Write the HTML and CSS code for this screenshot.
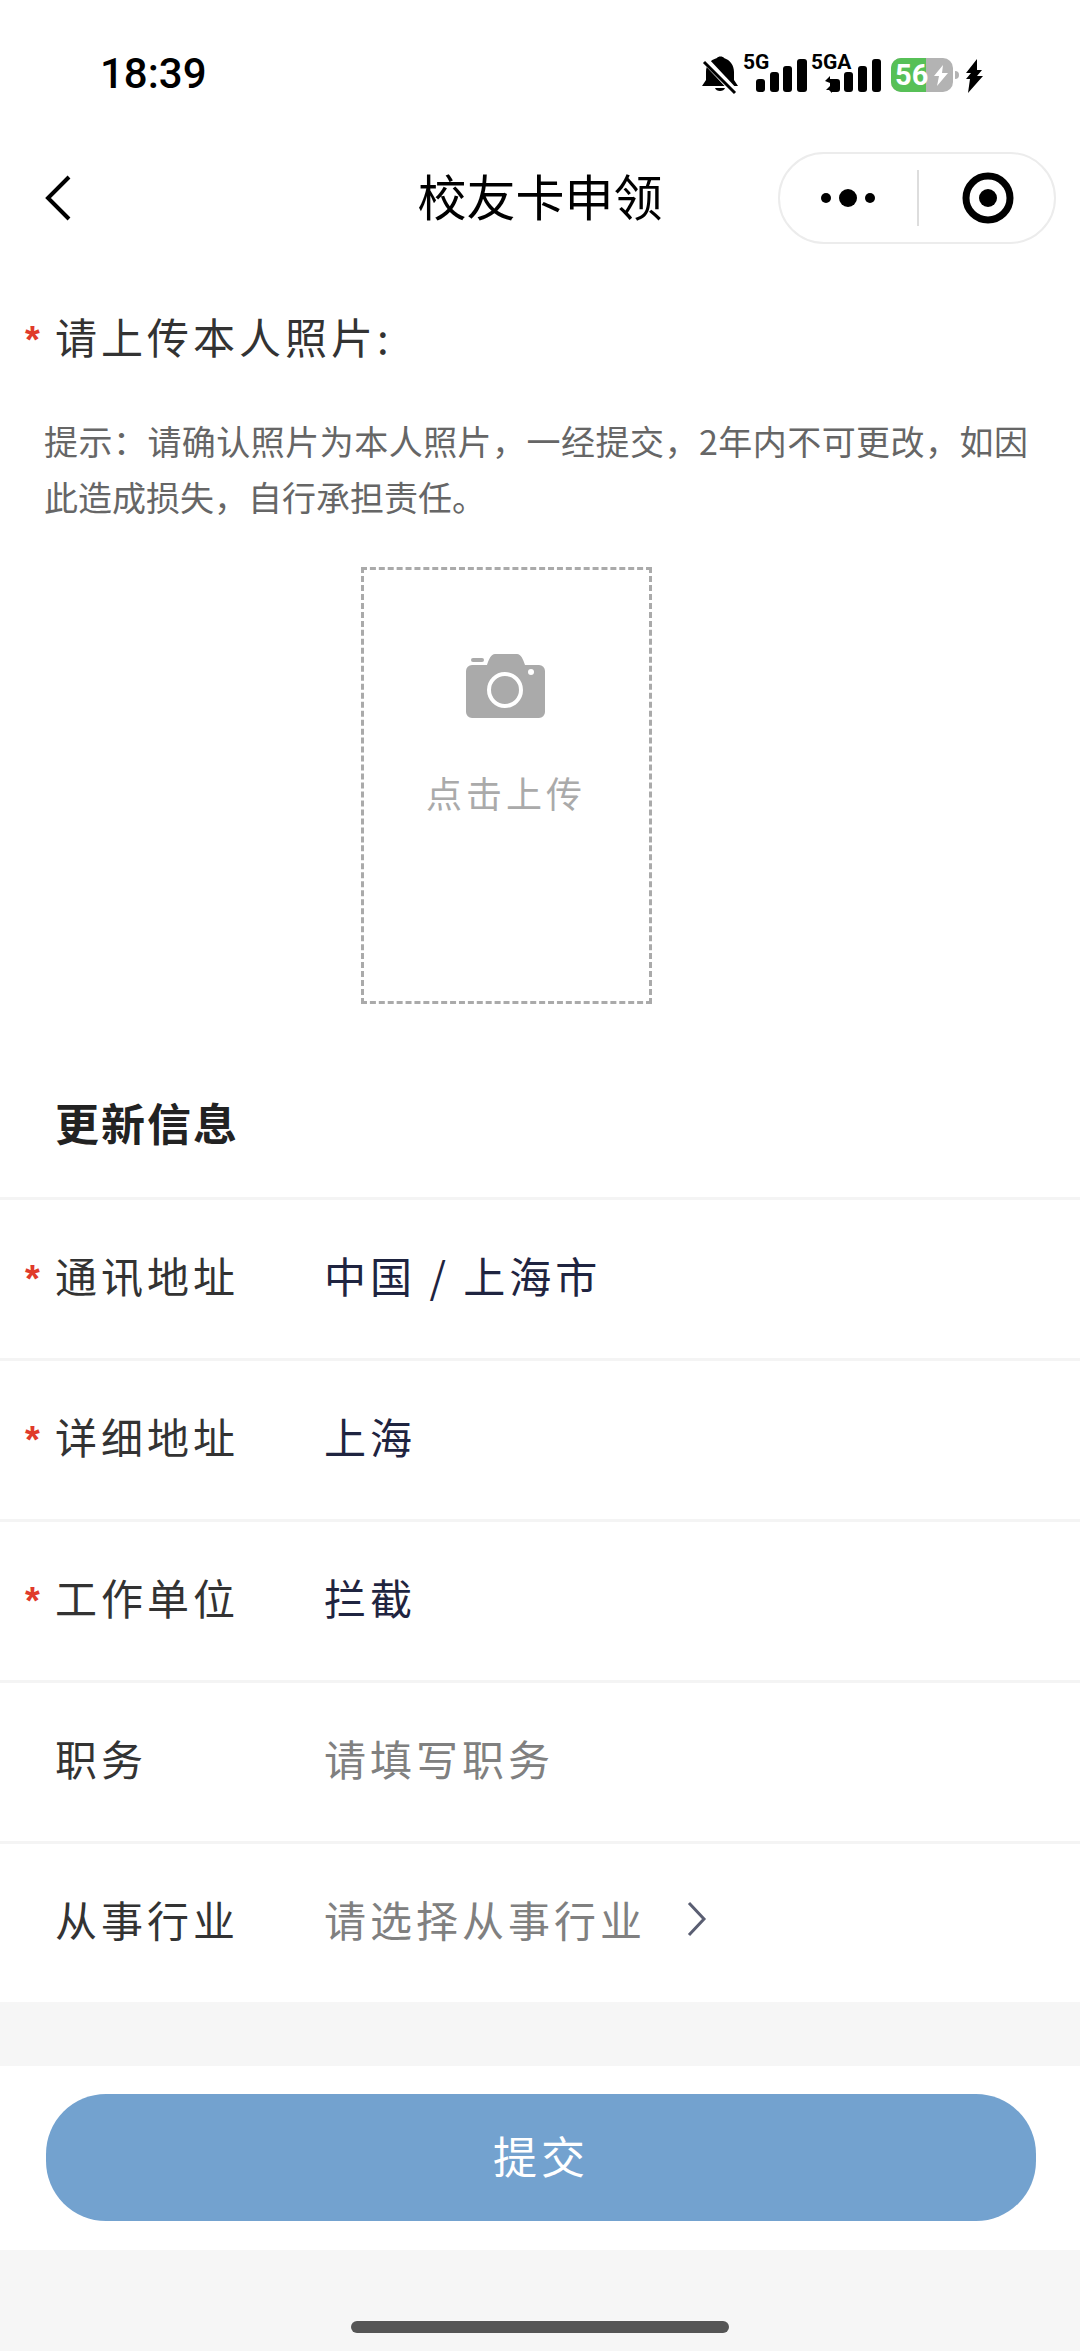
FILE: index.html
```html
<!DOCTYPE html>
<html lang="zh-CN">
<head>
<meta charset="utf-8">
<meta name="viewport" content="width=device-width, initial-scale=1">
<title>校友卡申领</title>
<link rel="stylesheet" href="styles.css">
</head>
<body>
<header class="top">
  <div class="status">
    <time class="clock">18:39</time>
    <svg class="status-icons" width="284" height="64" viewBox="0 -10 284 64" role="img" aria-label="静音，5G 信号，电量 56%">
      <g>
        <path d="M19 6c1-2 6-2 7 0 6 2 10 7 10 14v8l4 6H4l4-6v-8c0-7 4-12 11-14z" transform="translate(-2 0)"/>
        <path d="M15 36h10c-1 4-9 4-10 0z"/>
        <path d="M4 7l32 34" stroke="#fff" stroke-width="7"/>
        <path d="M4 10l31 31" stroke="#000" stroke-width="3"/>
      </g>
      <text class="net" x="43" y="17">5G</text>
      <rect x="56" y="27" width="9" height="13" rx="3"/>
      <rect x="70" y="20" width="9" height="20" rx="3"/>
      <rect x="83" y="14" width="9" height="26" rx="3"/>
      <rect x="97" y="7" width="10" height="33" rx="3"/>
      <text class="net" x="111" y="17">5GA</text>
      <path d="M125 29l5-5v3h7q3 0 3 3v7q0 3-3 3h-5v1l-3-3h-3l4-4v-3z"/>
      <rect x="144" y="20" width="9" height="20" rx="3"/>
      <rect x="158" y="14" width="9" height="26" rx="3"/>
      <rect x="172" y="7" width="9" height="33" rx="3"/>
      <rect x="191" y="6" width="62" height="34" rx="10" fill="#b3b3b3"/>
      <path d="M226 6h-25a10 10 0 0 0-10 10v14a10 10 0 0 0 10 10h25z" fill="#57c057"/>
      <path d="M255 19q4 0 4 4t-4 4z" fill="#b3b3b3"/>
      <text class="charge" x="195" y="33">56</text>
      <path d="M243 13l-9 11h5l-2 10 11-13h-6z" fill="#fff"/>
      <path d="M277 7l-11 14h5l-5 6h4l-2 14 15-17h-6l5-6h-5z"/>
    </svg>
  </div>
  <nav class="nav">
    <button class="icon-btn" type="button" aria-label="返回">
      <svg width="28" height="48" viewBox="0 0 28 48"><path d="M25 3L4 24l21 21" fill="none" stroke="#000" stroke-width="4"/></svg>
    </button>
    <h1 class="title">校友卡申领</h1>
    <div class="capsule">
      <button class="capsule-btn" type="button" aria-label="更多">
        <svg width="56" height="20" viewBox="0 0 56 20"><circle cx="6" cy="10" r="5"/><circle cx="28" cy="10" r="9"/><circle cx="50" cy="10" r="5"/></svg>
      </button>
      <button class="capsule-btn" type="button" aria-label="关闭">
        <svg width="52" height="52" viewBox="0 0 52 52"><circle cx="26" cy="26" r="22" fill="none" stroke="#000" stroke-width="7"/><circle cx="26" cy="26" r="9"/></svg>
      </button>
    </div>
  </nav>
</header>

<main>
  <form class="form">
    <section class="photo">
      <h2 class="photo-title"><span class="star">*</span><span>请上传本人照片:</span></h2>
      <p class="hint">提示：请确认照片为本人照片，一经提交，2年内不可更改，如因此造成损失，自行承担责任。</p>
      <div class="upload-wrap">
        <button class="upload" type="button">
          <svg width="80" height="64" viewBox="0 0 80 64">
            <path d="M6 11h15c2-6 4-11 8-11h22c4 0 6 5 8 11h14a6 6 0 0 1 6 6v41a6 6 0 0 1-6 6H6a6 6 0 0 1-6-6V17a6 6 0 0 1 6-6z" fill="#aaa"/>
            <rect x="5" y="4" width="13" height="4" rx="2" fill="#aaa"/>
            <circle cx="39" cy="36" r="16" fill="none" stroke="#fff" stroke-width="4"/>
            <circle cx="65" cy="18" r="3" fill="#fff"/>
          </svg>
          <span>点击上传</span>
        </button>
      </div>
    </section>

    <section class="info">
      <h2 class="info-title">更新信息</h2>
      <div class="row">
        <span class="star">*</span>
        <label for="region">通讯地址</label>
        <button class="value" id="region" type="button">中国 / 上海市</button>
      </div>
      <div class="row">
        <span class="star">*</span>
        <label for="address">详细地址</label>
        <input class="value" id="address" type="text" value="上海">
      </div>
      <div class="row">
        <span class="star">*</span>
        <label for="company">工作单位</label>
        <input class="value" id="company" type="text" value="拦截">
      </div>
      <div class="row">
        <span class="star"></span>
        <label for="job">职务</label>
        <input class="value" id="job" type="text" placeholder="请填写职务">
      </div>
      <div class="row">
        <span class="star"></span>
        <label for="industry">从事行业</label>
        <div class="picker">
          <select class="value empty" id="industry"><option value="">请选择从事行业</option></select>
          <svg width="20" height="36" viewBox="0 0 20 36"><path d="M2 2l15 16L2 34" fill="none" stroke="#5a5e72" stroke-width="3"/></svg>
        </div>
      </div>
    </section>

    <div class="submit-bar">
      <button class="submit" type="submit">提交</button>
    </div>
  </form>
</main>
<footer class="home"><div class="home-bar"></div></footer>
</body>
</html>
```

FILE: styles.css
```css
* {
  box-sizing: border-box;
}

body {
  margin: 0;
  min-height: 100vh;
  display: flex;
  flex-direction: column;
  background: #f6f6f6;
  color: #333;
  font-family: "Noto Sans CJK SC", sans-serif;
  font-size: 42px;
  line-height: 60px;
}

button,
input,
select {
  margin: 0;
  padding: 0;
  border: 0;
  border-radius: 0;
  background: none;
  color: inherit;
  font: inherit;
  letter-spacing: inherit;
  appearance: none;
}

svg {
  display: block;
  flex: none;
}

h1,
h2,
p {
  margin: 0;
}

/* Status bar and navigation */

.top {
  background: #fff;
}

.status {
  display: flex;
  align-items: center;
  justify-content: space-between;
  height: 148px;
  padding: 0 96px 0 100px;
}

.clock {
  color: #000;
  font-family: Roboto, sans-serif;
  font-size: 42px;
  font-weight: 500;
}

.net,
.charge {
  font-family: Roboto, sans-serif;
  font-weight: 700;
}

.net {
  font-size: 21px;
}

.charge {
  fill: #fff;
  font-size: 29px;
}

.nav {
  display: grid;
  grid-template-columns: 1fr auto 1fr;
  align-items: center;
  padding: 4px 24px 0 44px;
}

.icon-btn {
  justify-self: start;
}

.title {
  padding-bottom: 6px;
  margin-right: 20px;
  color: #000;
  font-size: 49px;
  font-weight: 400;
}

.capsule {
  display: grid;
  grid-template-columns: 1fr 1fr;
  justify-self: end;
  align-items: center;
  width: 278px;
  height: 92px;
  border: 2px solid #ececec;
  border-radius: 46px;
}

.capsule-btn {
  display: flex;
  align-items: center;
  justify-content: center;
  height: 56px;
  padding-right: 2px;
}

.capsule-btn + .capsule-btn {
  padding: 0 0 0 2px;
  border-left: 2px solid #ddd;
}

/* Photo upload */

.form {
  letter-spacing: 4px;
}

.photo {
  padding-top: 62px;
  background: #fff;
}

.photo-title,
.row {
  display: grid;
  grid-template-columns: 30px 269px 1fr;
  align-items: center;
  padding-left: 25px;
}

.photo-title {
  grid-template-columns: 30px 1fr;
  font-size: 42px;
  font-weight: 400;
}

.star {
  padding-top: 8px;
  color: #e03a2a;
  font-family: "Liberation Sans", sans-serif;
  font-size: 38px;
  font-weight: 700;
  line-height: 36px;
}

.hint {
  padding: 47px 52px 0 44px;
  color: #666;
  font-size: 34px;
  line-height: 56px;
  letter-spacing: 0;
  text-align: justify;
}

.upload-wrap {
  display: flex;
  justify-content: center;
  padding: 42px 68px 0 0;
}

.upload {
  display: flex;
  flex-direction: column;
  align-items: center;
  gap: 44px;
  width: 291px;
  height: 437px;
  padding-top: 84px;
  border: 3px dashed #aaa;
  color: #aaa;
  font-size: 36px;
}

/* Personal details */

.info {
  padding-top: 88px;
  background: #fff;
}

.info-title {
  padding: 0 55px 45px;
  color: #222;
  font-size: 44px;
  font-weight: 700;
  letter-spacing: 2px;
}

.row {
  height: 161px;
  padding-bottom: 8px;
  border-top: 3px solid #f4f4f4;
}

.value {
  height: 60px;
  color: #1f2440;
  text-align: left;
}

.value::placeholder,
.empty {
  color: #808080;
}

.picker {
  display: flex;
  align-items: center;
  gap: 40px;
}

/* Footer */

.submit-bar {
  margin-top: 64px;
  padding: 28px 44px 29px 46px;
  background: #fff;
}

.submit {
  width: 100%;
  height: 127px;
  padding-bottom: 6px;
  border-radius: 60px;
  background: #73a2cf;
  color: #fff;
  font-size: 44px;
}

.home {
  display: flex;
  flex: 1;
  align-items: flex-end;
  justify-content: center;
  padding: 24px 0 18px;
}

.home-bar {
  width: 35%;
  height: 12px;
  border-radius: 6px;
  background: #555;
}
```
